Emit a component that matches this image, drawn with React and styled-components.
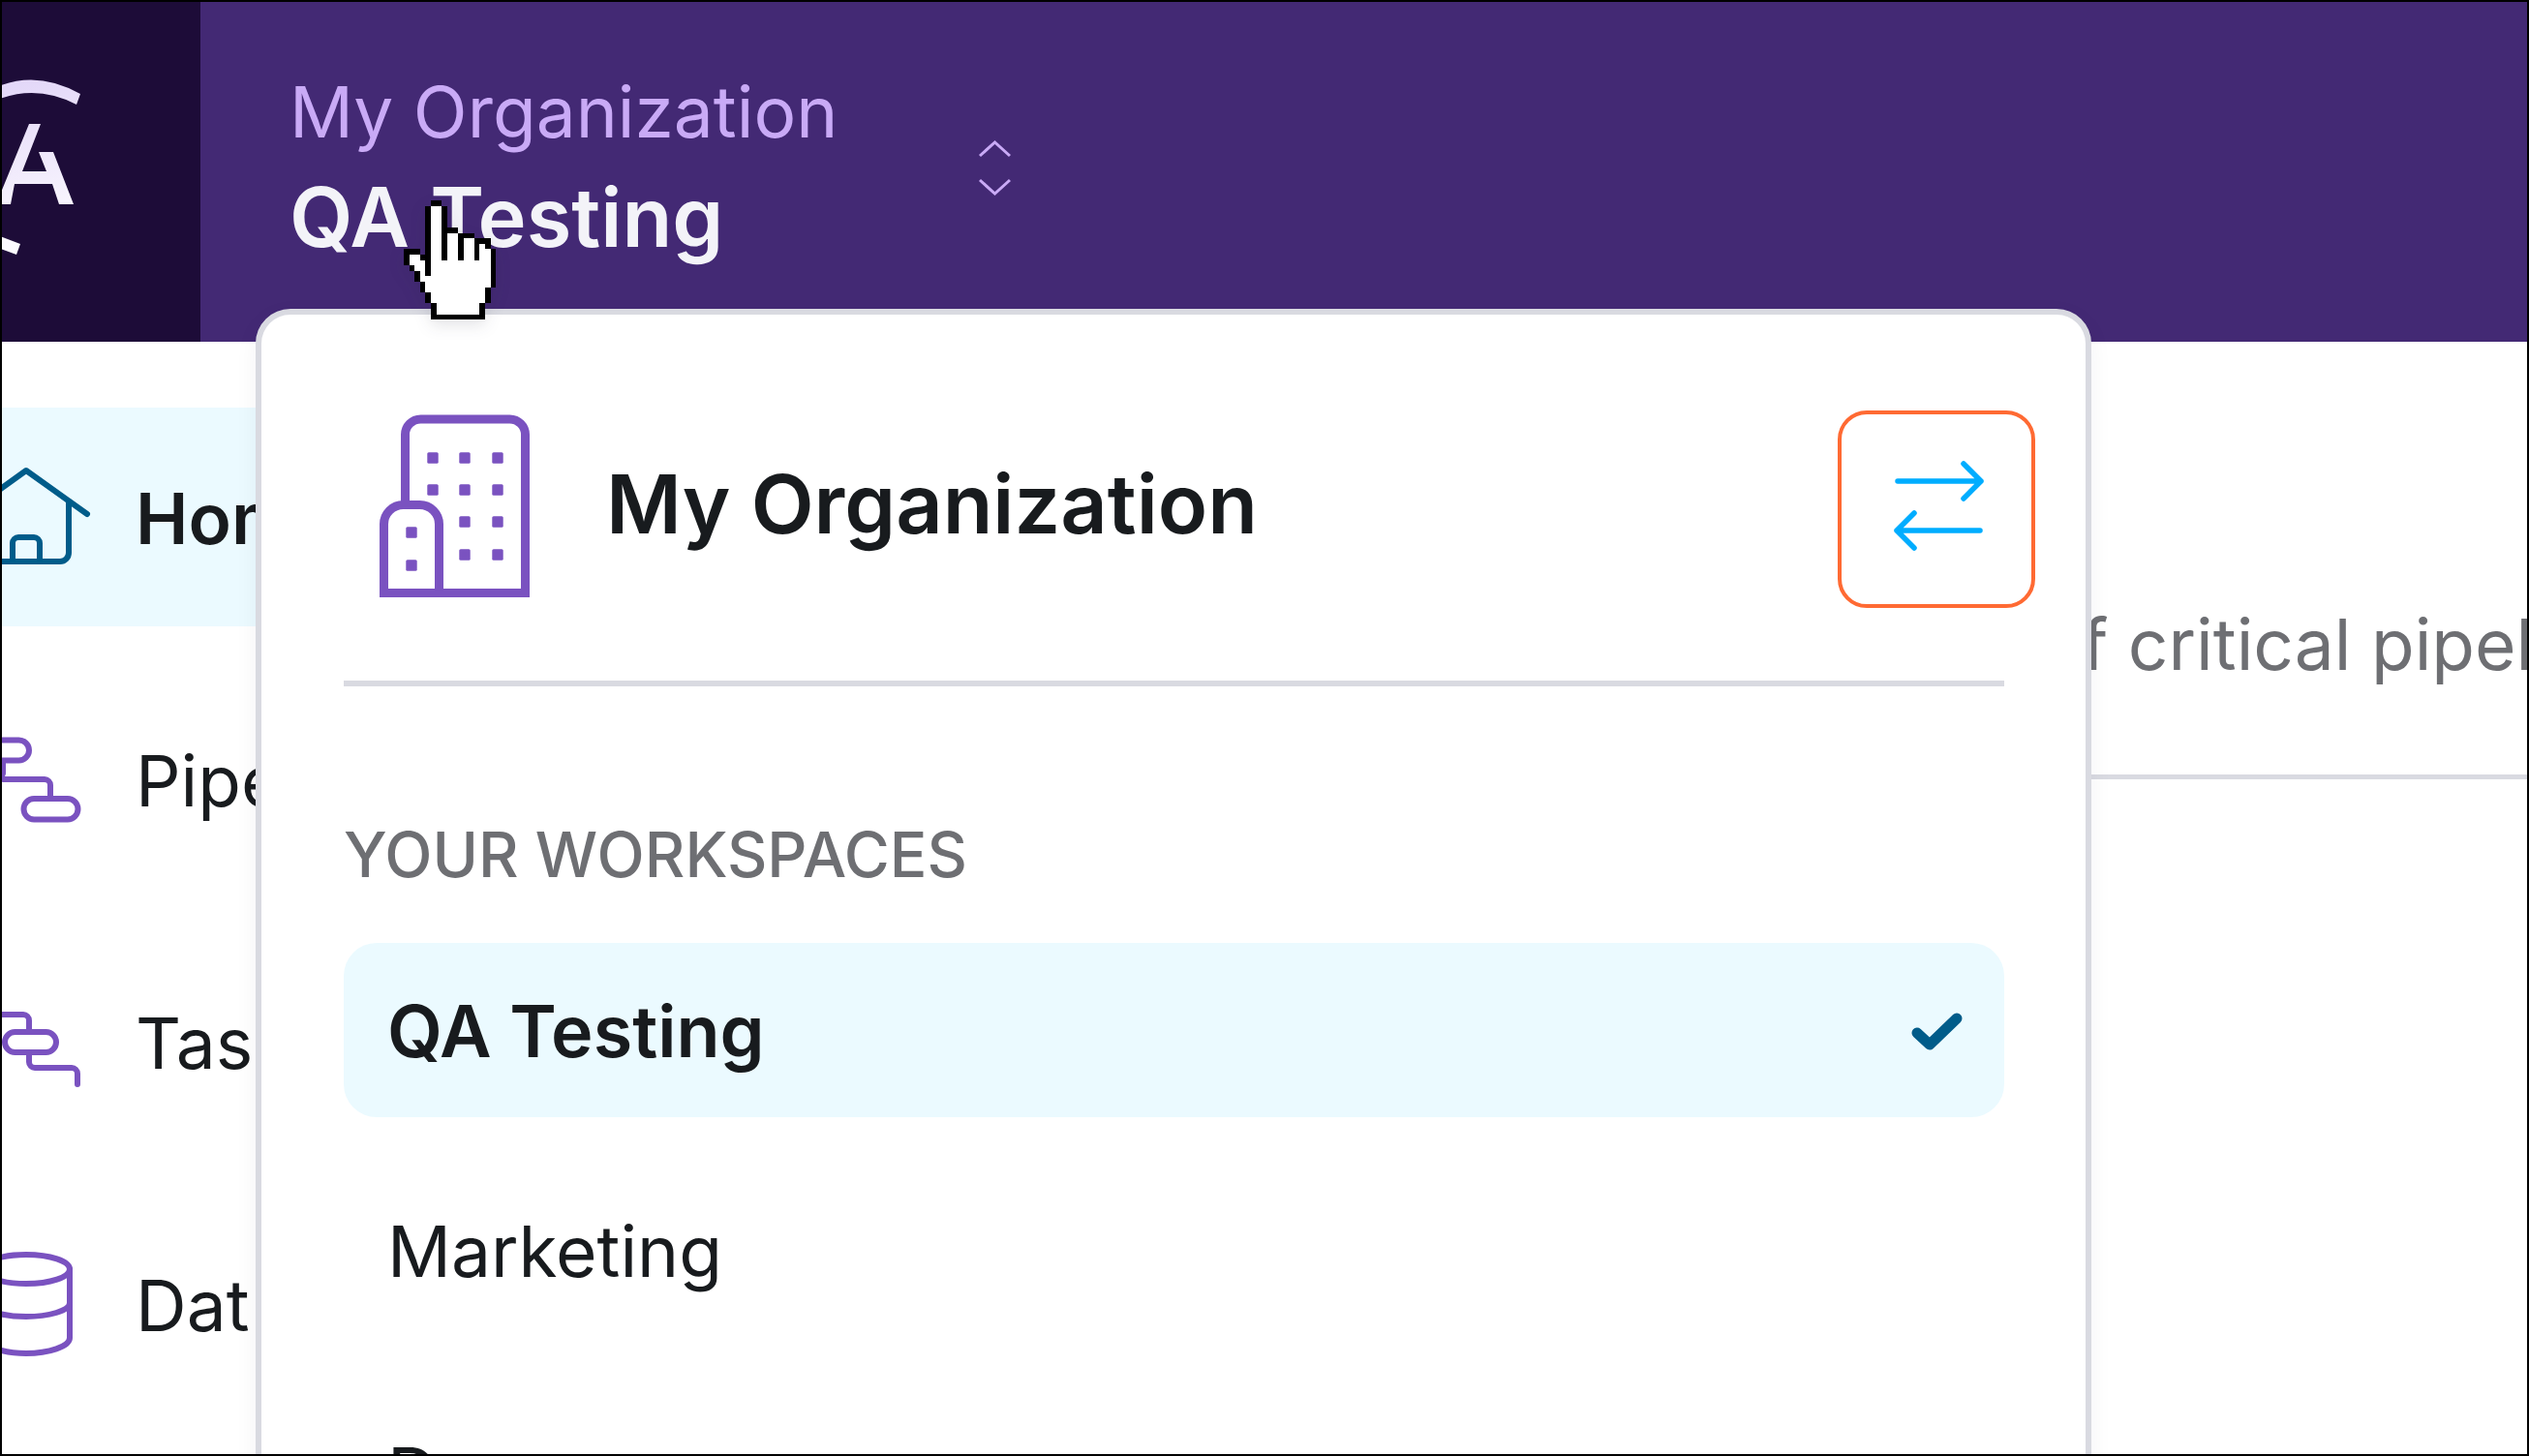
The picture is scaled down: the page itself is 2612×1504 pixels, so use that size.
import React from "react";
import styled, { createGlobalStyle } from "styled-components";

const Global = createGlobalStyle`
  html, body { margin: 0; padding: 0; background: #fff; }
  body { font-family: Inter, "Liberation Sans", sans-serif; color: #181b1e; }
  * { box-sizing: border-box; }
`;

const Frame = styled.div`
  position: relative;
  width: 2612px;
  height: 1504px;
  border: 2px solid #000;
  overflow: hidden;
  background: #fff;
  display: flex;
  flex-direction: column;
`;

const Header = styled.header`
  flex: none;
  height: 351px;
  display: flex;
  background: #432974;
`;

const LogoCell = styled.div`
  flex: none;
  width: 205px;
  background: #1d0c38;
  svg { display: block; }
`;

const OrgBlock = styled.div`
  width: 800px;
  padding: 64px 0 0 92px;
`;

const OrgName = styled.div`
  font-size: 73px;
  line-height: 100px;
  font-weight: 400;
  color: #c9aaf6;
  white-space: nowrap;
`;

const WorkspaceName = styled.div`
  font-size: 84.8px;
  line-height: 116px;
  font-weight: 600;
  color: #f3f3f8;
  white-space: nowrap;
`;

const Chevrons = styled.svg`
  flex: none;
  margin-top: 137px;
  width: 40px;
  height: 70px;
`;

const Body = styled.div`
  flex: 1;
  display: flex;
  min-height: 0;
`;

const Sidebar = styled.nav`
  flex: none;
  width: 640px;
  padding-top: 68px;
  display: flex;
  flex-direction: column;
  gap: 45px;
`;

const NavRow = styled.div`
  flex: none;
  height: 226px;
  display: flex;
  align-items: center;
  gap: 38px;
  font-size: 73px;
  font-weight: ${(p) => (p.$active ? 600 : 400)};
  background: ${(p) => (p.$active ? "#ebfaff" : "transparent")};
  svg { flex: none; width: 100px; height: 120px; }
`;

const NavLabel = styled.span`
  margin-top: 3px;
`;

const Main = styled.main`
  flex: 1;
  min-width: 0;
`;

const MainHead = styled.div`
  height: 452px;
  padding: 270px 0 0 299px;
  border-bottom: 5px solid #d9dae1;
  font-size: 73px;
  line-height: 86px;
  color: #6e6f73;
  white-space: nowrap;
`;

const Popover = styled.div`
  position: absolute;
  left: 262px;
  top: 317px;
  width: 1896px;
  height: 1400px;
  padding: 99px 84px 0 85px;
  background: #fff;
  border: 6px solid #d9dae1;
  border-radius: 36px;
  box-shadow: 0 8px 24px rgba(30, 30, 60, 0.05);
`;

const PopHead = styled.div`
  display: flex;
  align-items: center;
  padding-bottom: 75px;
  border-bottom: 6px solid #d9dae1;
`;

const Building = styled.svg`
  flex: none;
  width: 271px;
  height: 204px;
`;

const PopTitle = styled.div`
  flex: 1;
  margin-bottom: 13px;
  font-size: 84.5px;
  font-weight: 600;
  white-space: nowrap;
`;

const SwitchButton = styled.button`
  flex: none;
  width: 204px;
  height: 204px;
  margin-right: -32px;
  padding: 0;
  background: #fff;
  border: 4px solid #ff6a33;
  border-radius: 30px;
  svg { display: block; width: 196px; height: 196px; }
`;

const SectionLabel = styled.div`
  margin-top: 135px;
  font-size: 64.2px;
  line-height: 77px;
  font-weight: 500;
  color: #6e6f73;
  white-space: nowrap;
`;

const WorkspaceList = styled.div`
  margin-top: 53px;
  display: flex;
  flex-direction: column;
  gap: 49px;
`;

const WorkspaceRow = styled.div`
  height: 180px;
  padding: ${(p) => (p.$active ? "3px 40px 0 45px" : "0 40px 2px 45px")};
  display: flex;
  align-items: center;
  justify-content: space-between;
  border-radius: 34px;
  font-size: ${(p) => (p.$active ? "73.7px" : "73px")};
  font-weight: ${(p) => (p.$active ? 600 : 400)};
  background: ${(p) => (p.$active ? "#ebfaff" : "transparent")};
  svg { flex: none; width: 60px; height: 40px; }
`;

const CursorArt = styled.svg`
  position: absolute;
  left: 415px;
  top: 205px;
  width: 95.2px;
  height: 123.2px;
  filter: drop-shadow(0 6px 8px rgba(30, 30, 60, 0.12));
`;

const CURSOR = [
  "     ##          ",
  "    #..#         ",
  "    #..#         ",
  "    #..#         ",
  "    #..#         ",
  "    #..###       ",
  "    #..#..###    ",
  "    #..#..#..### ",
  "    #..#..#..#.# ",
  "### #..#..#..#..#",
  "#..##..#..#..#..#",
  "#...#...........#",
  " #..#...........#",
  "  #.#...........#",
  "  #.............#",
  "   #............#",
  "   #...........# ",
  "    #..........# ",
  "    #..........# ",
  "     #........#  ",
  "     #........#  ",
  "     ##########  ",
];

const Cursor = () => (
  <CursorArt viewBox="0 0 17 22" shapeRendering="crispEdges">
    {CURSOR.flatMap((row, y) =>
      row.split("").map((c, x) =>
        c === " " ? null : (
          <rect key={`${x}-${y}`} x={x} y={y} width="1.02" height="1.02" fill={c === "#" ? "#000" : "#fff"} />
        )
      )
    )}
  </CursorArt>
);

const Logo = () => (
  <svg width="205" height="351" viewBox="2 2 205 351">
    <defs>
      <linearGradient id="lg" gradientUnits="userSpaceOnUse" x1="10" y1="80" x2="60" y2="265">
        <stop offset="0" stopColor="#e2d6f8" />
        <stop offset="1" stopColor="#ffffff" />
      </linearGradient>
    </defs>
    <path fill="url(#lg)" d="M-10 93 Q35 70 83 97 L79 108 Q35 85 -10 106 Z" />
    <path fill="url(#lg)" d="M-10 240 L21 252 L17 263 L-10 253 Z" />
    <path fill="url(#lg)" d="M30 128 H42 L23 177 H48 L40 157 H55 L76 211 H61 L54 190 H15 L11 211 H-4 Z" />
  </svg>
);

const HomeIcon = () => (
  <svg viewBox="2 474 100 120" fill="none" stroke="#005c8a" strokeWidth="6" strokeLinecap="round" strokeLinejoin="round">
    <path d="M-37 532 L27 486 L90 531" />
    <path d="M71 518 V571 a9 9 0 0 1 -9 9 H-8 a9 9 0 0 1 -9 -9 V518" />
    <path d="M13 580 V561 a6 6 0 0 1 6 -6 H35 a6 6 0 0 1 6 6 V580" />
  </svg>
);

const PipelineIcon = () => (
  <svg viewBox="2 745 100 120" fill="none" stroke="#7a52c0" strokeWidth="6" strokeLinecap="round" strokeLinejoin="round">
    <rect x="-30" y="764.5" width="60" height="21" rx="10.5" />
    <path d="M3 786 V799 a6 6 0 0 0 0 6 H46 a6 6 0 0 1 6 6 V825" />
    <rect x="24.5" y="825" width="56" height="21.5" rx="10.7" />
  </svg>
);

const TaskIcon = () => (
  <svg viewBox="2 1016 100 120" fill="none" stroke="#7a52c0" strokeWidth="6" strokeLinecap="round" strokeLinejoin="round">
    <path d="M-10 1048 H24 a6 6 0 0 1 6 6 V1066" />
    <rect x="5" y="1066" width="53" height="21" rx="10.5" />
    <path d="M30 1087 V1097 a6 6 0 0 0 6 6 H74 a6 6 0 0 1 6 6 V1120" />
  </svg>
);

const DataIcon = () => (
  <svg viewBox="2 1287 100 120" fill="none" stroke="#7a52c0" strokeWidth="6" strokeLinecap="round" strokeLinejoin="round">
    <ellipse cx="27" cy="1311" rx="45" ry="15" />
    <path d="M72 1311 V1382 C72 1391 50 1398 27 1398 C4 1398 -18 1391 -18 1382" />
    <path d="M72 1346 C72 1354 50 1360 27 1360 C4 1360 -18 1354 -18 1346" />
  </svg>
);

const BuildingIcon = () => (
  <Building viewBox="355 424 271 204" fill="none" stroke="#7a52c0" strokeWidth="9">
    <path d="M418.5 518 V449 a16 16 0 0 1 16 -16 H526.5 a16 16 0 0 1 16 16 V612.5 H392" />
    <path d="M396.5 617 V541.5 a20 20 0 0 1 20 -20 H433.5 a20 20 0 0 1 20 20 V612" />
    <g fill="#7a52c0" stroke="none">
      {[447, 480, 514].flatMap((x) =>
        [473, 506].map((y) => <rect key={`${x}-${y}`} x={x - 5.7} y={y - 5.7} width="11.4" height="11.4" rx="1.5" />)
      )}
      {[480, 514].flatMap((x) =>
        [539, 573].map((y) => <rect key={`${x}-${y}`} x={x - 5.7} y={y - 5.7} width="11.4" height="11.4" rx="1.5" />)
      )}
      {[550, 584].map((y) => <rect key={y} x={419.3} y={y - 5.7} width="11.4" height="11.4" rx="1.5" />)}
    </g>
  </Building>
);

export default function App() {
  return (
    <>
      <Global />
      <Frame>
        <Header>
          <LogoCell><Logo /></LogoCell>
          <OrgBlock>
            <OrgName>My Organization</OrgName>
            <WorkspaceName>QA Testing</WorkspaceName>
          </OrgBlock>
          <Chevrons viewBox="1007 139 40 70" fill="none" stroke="#c9aaf6" strokeWidth="3">
            <path d="M1012 161 L1027.5 147 L1043 161" />
            <path d="M1012 186 L1027.5 200 L1043 186" />
          </Chevrons>
        </Header>
        <Body>
          <Sidebar>
            <NavRow $active><HomeIcon /><NavLabel>Home</NavLabel></NavRow>
            <NavRow><PipelineIcon /><NavLabel>Pipelines</NavLabel></NavRow>
            <NavRow><TaskIcon /><NavLabel>Tasks</NavLabel></NavRow>
            <NavRow><DataIcon /><NavLabel>Dat</NavLabel></NavRow>
          </Sidebar>
          <Main>
            <MainHead>See the current status and health of critical pipelines</MainHead>
          </Main>
        </Body>
        <Popover>
          <PopHead>
            <BuildingIcon />
            <PopTitle>My Organization</PopTitle>
            <SwitchButton aria-label="Switch organization">
              <svg viewBox="1902 428 196 196" fill="none" stroke="#00adff" strokeWidth="5.5" strokeLinecap="round" strokeLinejoin="round">
                <path d="M1960 497 H2046 M2028 479 L2046 497 L2028 515" />
                <path d="M2045 548 H1959 M1977 530 L1959 548 L1977 566" />
              </svg>
            </SwitchButton>
          </PopHead>
          <SectionLabel>YOUR WORKSPACES</SectionLabel>
          <WorkspaceList>
            <WorkspaceRow $active>
              QA Testing
              <svg viewBox="1970 1044 60 40" fill="none" stroke="#005c8a" strokeWidth="11" strokeLinecap="round" strokeLinejoin="round">
                <path d="M1980 1065 L1993 1077 L2021 1050" />
              </svg>
            </WorkspaceRow>
            <WorkspaceRow>Marketing</WorkspaceRow>
            <WorkspaceRow>Demo</WorkspaceRow>
          </WorkspaceList>
        </Popover>
        <Cursor />
      </Frame>
    </>
  );
}
